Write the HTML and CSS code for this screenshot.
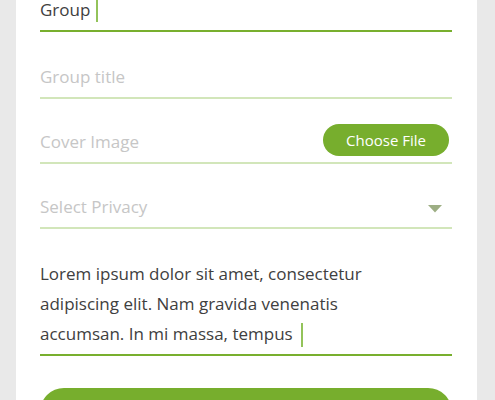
FILE: index.html
```html
<!doctype html>
<html lang="en">
  <head>
    <meta charset="UTF-8" />
    <meta name="viewport" content="width=device-width, initial-scale=1.0" />
    <title>Create Group</title>
    <link rel="stylesheet" href="styles.css">
  </head>
  <body>
    <div class="card">
      <div class="field active first">
        <span class="value">Group</span><span class="caret"></span>
      </div>

      <div class="field">
        <span class="placeholder">Group title</span>
      </div>

      <div class="field file-field">
        <span class="placeholder">Cover Image</span>
        <button class="choose-btn">Choose File</button>
      </div>

      <div class="field select-field">
        <span class="placeholder">Select Privacy</span>
        <svg class="arrow" width="14" height="8" viewBox="0 0 14 8">
          <polygon points="0,0 14,0 7,7.5" fill="#9dae84" />
        </svg>
      </div>

      <div class="field active textarea">
        <p class="value">
          Lorem ipsum dolor sit amet, consectetur adipiscing elit. Nam gravida venenatis
          accumsan. In mi massa, tempus<span class="caret"></span>
        </p>
      </div>

      <button class="submit-btn"></button>
    </div>
  </body>
</html>
```

FILE: styles.css
```css
body {
  margin: 0;
  background-color: #e9e9e9;
  font-family: "Open Sans", "Noto Sans", sans-serif;
  height: 400px;
  overflow: hidden;
}
.card {
  background-color: white;
  margin: -2px 0 0 16px;
  width: 461px;
  height: 402px;
  padding: 0 25px 0 24px;
  box-sizing: border-box;
}
.field {
  display: flex;
  align-items: flex-end;
  font-size: 17px;
  line-height: 24px;
  padding-bottom: 8px;
  border-bottom: 2px solid #d2e6ba;
  margin-bottom: 31px;
}
.field.first {
  margin-bottom: 33px;
}
.field.select-field {
  margin-bottom: 30px;
}
.field.active {
  border-bottom-color: #78af2e;
}
.value {
  color: #404040;
}
.placeholder {
  color: #c6c6c6;
}
.caret {
  display: inline-block;
  width: 2px;
  height: 22px;
  background-color: #93c35a;
  margin-left: 6px;
  vertical-align: -5px;
}
.file-field {
  justify-content: space-between;
  align-items: center;
  height: 24px;
}
.choose-btn {
  font-family: inherit;
  font-size: 15px;
  color: white;
  background-color: #77ae2d;
  border: none;
  border-radius: 16px;
  width: 126px;
  height: 32px;
  margin-right: 3px;
  margin-top: -4px;
  padding: 0;
}
.select-field {
  justify-content: space-between;
}
.arrow {
  margin-right: 10px;
  margin-bottom: 6px;
}
.textarea {
  padding-bottom: 5px;
  margin-bottom: 32px;
}
.textarea p {
  margin: 0;
  max-width: 380px;
  line-height: 30px;
}
.textarea .caret {
  margin-left: 8px;
  height: 24px;
  vertical-align: -7px;
}
.submit-btn {
  display: block;
  width: 100%;
  height: 48px;
  border: none;
  border-radius: 24px;
  background-color: #77ae2d;
}
```
